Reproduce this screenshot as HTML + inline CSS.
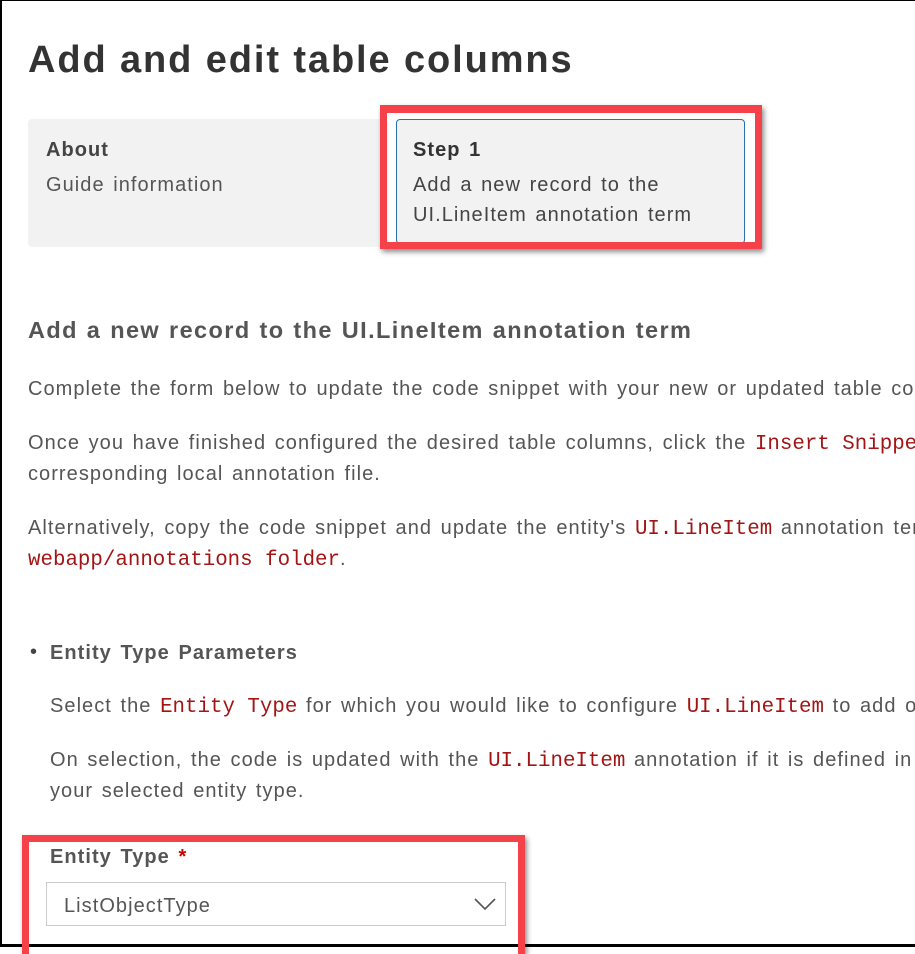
<!DOCTYPE html>
<html><head><meta charset="utf-8"><style>
html,body{margin:0;padding:0;background:#fff}
body{width:915px;height:947px;position:relative;overflow:hidden;font-family:"Liberation Sans",sans-serif;color:#555}
.frame{position:absolute;left:0;top:0;width:913px;height:943px;border-left:2px solid #000;border-bottom:3px solid #000;border-top:1px solid #000;border-right:1px solid #000}
.a{position:absolute;white-space:nowrap}
h1{position:absolute;left:28px;top:39px;margin:0;font-size:38px;font-weight:bold;color:#333;letter-spacing:1.9px}
.card{position:absolute;background:#f2f2f2;border-radius:4px}
.t{font-size:20px;letter-spacing:1.05px;word-spacing:2px}
code{font-family:"Liberation Mono",monospace;color:#a31515;font-size:20.8px;letter-spacing:0;word-spacing:0}
.red{position:absolute;border:7px solid #f5424a;box-shadow:2px 3px 5px rgba(0,0,0,.45)}
</style></head><body>
<div class="frame"></div>
<h1>Add and edit table columns</h1>
<div class="card" style="left:28px;top:119px;width:360px;height:128px"></div>
<div class="a t" style="left:46px;top:139px;font-weight:bold;color:#444">About</div>
<div class="a t" style="left:46px;top:174px">Guide information</div>
<div class="card" style="left:396px;top:119px;width:349px;height:125px;border:1px solid #2a6fb0;box-sizing:border-box"></div>
<div class="a t" style="left:413px;top:139px;font-weight:bold;color:#333">Step 1</div>
<div class="a t" style="left:413px;top:174px;color:#444">Add a new record to the</div>
<div class="a t" style="left:413px;top:204px;color:#444">UI.LineItem annotation term</div>
<div class="red" style="left:380px;top:105px;width:368px;height:129px;border-top-width:8px"></div>

<div class="a" style="left:28px;top:317px;font-size:23.5px;font-weight:bold;color:#555;letter-spacing:1.4px;word-spacing:1px">Add a new record to the UI.LineItem annotation term</div>
<div class="a t" style="left:28px;top:378px">Complete the form below to update the code snippet with your new or updated table co</div>
<div class="a t" style="left:28px;top:432px">Once you have finished configured the desired table columns, click the <code>Insert Snippet</code></div>
<div class="a t" style="left:28px;top:463px">corresponding local annotation file.</div>
<div class="a t" style="left:28px;top:517px">Alternatively, copy the code snippet and update the entity's <code>UI.LineItem</code> annotation ter</div>
<div class="a t" style="left:28px;top:548px"><code>webapp/annotations folder</code>.</div>
<div class="a" style="left:30px;top:641px;font-size:20px;color:#444">•</div>
<div class="a t" style="left:50px;top:642px;font-weight:bold;color:#555">Entity Type Parameters</div>
<div class="a t" style="left:50px;top:695px">Select the <code>Entity Type</code> for which you would like to configure <code>UI.LineItem</code> to add or</div>
<div class="a t" style="left:50px;top:749px">On selection, the code is updated with the <code>UI.LineItem</code> annotation if it is defined in t</div>
<div class="a t" style="left:50px;top:780px">your selected entity type.</div>

<div class="a t" style="left:50px;top:846px;font-weight:bold;color:#555">Entity Type <span style="color:#c00">*</span></div>
<div style="position:absolute;left:46px;top:882px;width:460px;height:44px;border:1px solid #ccc;box-sizing:border-box"></div>
<div class="a t" style="left:64px;top:895px">ListObjectType</div>
<svg style="position:absolute;left:474px;top:897px" width="22" height="14" viewBox="0 0 22 14"><path d="M1 2 L11 12 L21 2" fill="none" stroke="#555" stroke-width="1.6"/></svg>
<div class="red" style="left:22px;top:835px;width:489px;height:112px;border-bottom-width:0"></div>
</body></html>
